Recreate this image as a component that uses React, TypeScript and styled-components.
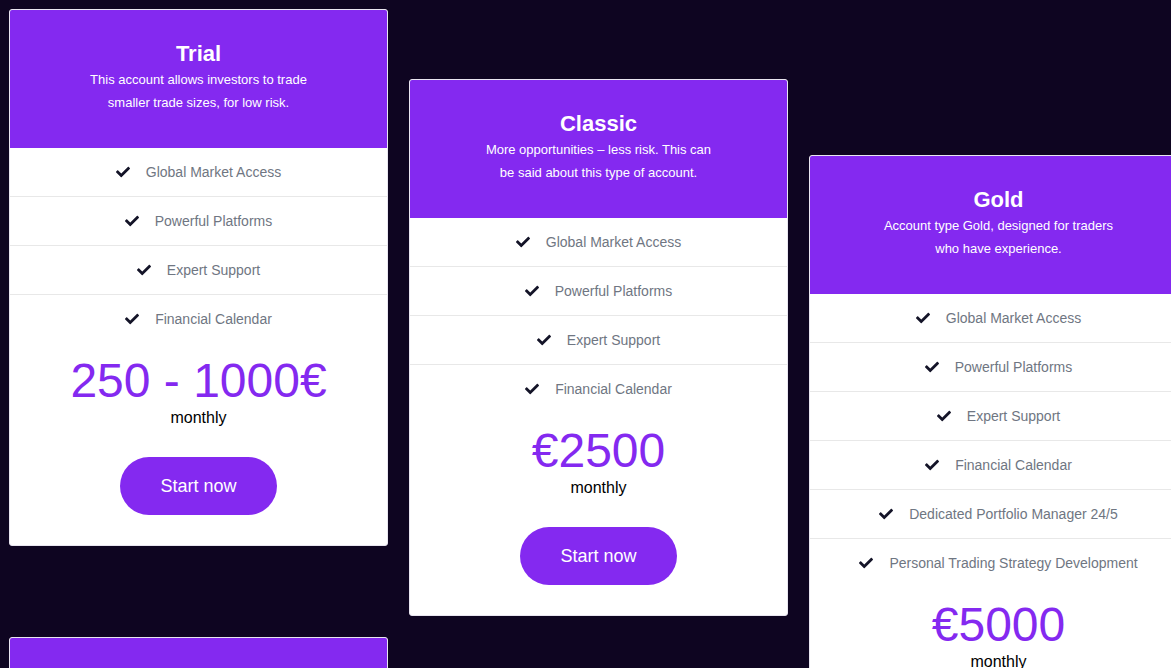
import styled, { createGlobalStyle } from "styled-components";
import { FaCheck } from "react-icons/fa";

const GlobalStyle = createGlobalStyle`
    html, body {
        margin: 0;
        background-color: #0e0521;
        overflow: hidden;
    }
    body {
        padding: 9px 0 0 9px;
        font-family: "Liberation Sans", Arial, sans-serif;
    }
`;

type Plano = {
    nome: string;
    descricao: string;
    preco: string;
    itens: string[];
};

const planos: Plano[][] = [
    [
        {
            nome: "Trial",
            descricao: "This account allows investors to trade smaller trade sizes, for low risk.",
            preco: "250 - 1000€",
            itens: ["Global Market Access", "Powerful Platforms", "Expert Support", "Financial Calendar"],
        },
        {
            nome: "Platinum",
            descricao: "Account type Platinum, for professional traders with large volumes.",
            preco: "€10000",
            itens: ["Global Market Access", "Powerful Platforms", "Expert Support", "Financial Calendar"],
        },
    ],
    [
        {
            nome: "Classic",
            descricao: "More opportunities – less risk. This can be said about this type of account.",
            preco: "€2500",
            itens: ["Global Market Access", "Powerful Platforms", "Expert Support", "Financial Calendar"],
        },
    ],
    [
        {
            nome: "Gold",
            descricao: "Account type Gold, designed for traders who have experience.",
            preco: "€5000",
            itens: [
                "Global Market Access",
                "Powerful Platforms",
                "Expert Support",
                "Financial Calendar",
                "Dedicated Portfolio Manager 24/5",
                "Personal Trading Strategy Development",
            ],
        },
    ],
];

// deslocamento de cada coluna (layout escalonado)
const offsets = [0, 70, 146];

const Grade = styled.div`
    display: flex;
    align-items: flex-start;
    gap: 21px;
    width: 1200px;
`;

const Coluna = styled.div<{ $offset: number }>`
    display: flex;
    flex-direction: column;
    gap: 91px;
    width: 379px;
    padding-top: ${(p) => p.$offset}px;
`;

const Card = styled.div`
    background-color: #fff;
    border: 1px solid #e9e6f0;
    border-radius: 3px;
    overflow: hidden;
    display: flex;
    flex-direction: column;
    text-align: center;
`;

const Cabecalho = styled.div`
    background-color: #8429f0;
    color: #fff;
    padding: 30px 20px 34px;
    & h3 {
        margin: 0;
        font-size: 22px;
        line-height: 28px;
        font-weight: 700;
    }
    & p {
        margin: 0 auto;
        max-width: 236px;
        font-size: 13px;
        line-height: 23px;
    }
`;

const Lista = styled.ul`
    list-style: none;
    margin: 0;
    padding: 0;
`;

const Item = styled.li`
    display: flex;
    justify-content: center;
    align-items: center;
    gap: 16px;
    padding: 15px 10px;
    line-height: 18px;
    font-size: 14px;
    color: #6f7682;
    border-bottom: 1px solid #e8e8e8;
    &:last-child {
        border-bottom: none;
    }
    & svg {
        color: #141428;
        width: 14px;
        height: 14px;
    }
`;

const Preco = styled.div`
    margin-top: 10px;
    font-size: 48px;
    line-height: 56px;
    color: #8429f0;
`;

const Periodo = styled.div`
    font-size: 16px;
    line-height: 18px;
    color: #000;
`;

const Botao = styled.button`
    align-self: center;
    margin: 30px 0 30px;
    width: 157px;
    height: 58px;
    border: none;
    border-radius: 29px;
    background-color: #8429f0;
    color: #fff;
    font-family: "Liberation Sans", Arial, sans-serif;
    font-size: 18px;
    cursor: pointer;
`;

function CardPlano({ plano }: { plano: Plano }) {
    return (
        <Card>
            <Cabecalho>
                <h3>{plano.nome}</h3>
                <p>{plano.descricao}</p>
            </Cabecalho>
            <Lista>
                {plano.itens.map((item) => (
                    <Item key={item}>
                        <FaCheck />
                        <span>{item}</span>
                    </Item>
                ))}
            </Lista>
            <Preco>{plano.preco}</Preco>
            <Periodo>monthly</Periodo>
            <Botao>Start now</Botao>
        </Card>
    );
}

export default function App() {
    return (
        <>
            <GlobalStyle />
            <Grade>
                {planos.map((coluna, i) => (
                    <Coluna key={i} $offset={offsets[i]}>
                        {coluna.map((plano) => (
                            <CardPlano key={plano.nome} plano={plano} />
                        ))}
                    </Coluna>
                ))}
            </Grade>
        </>
    );
}
